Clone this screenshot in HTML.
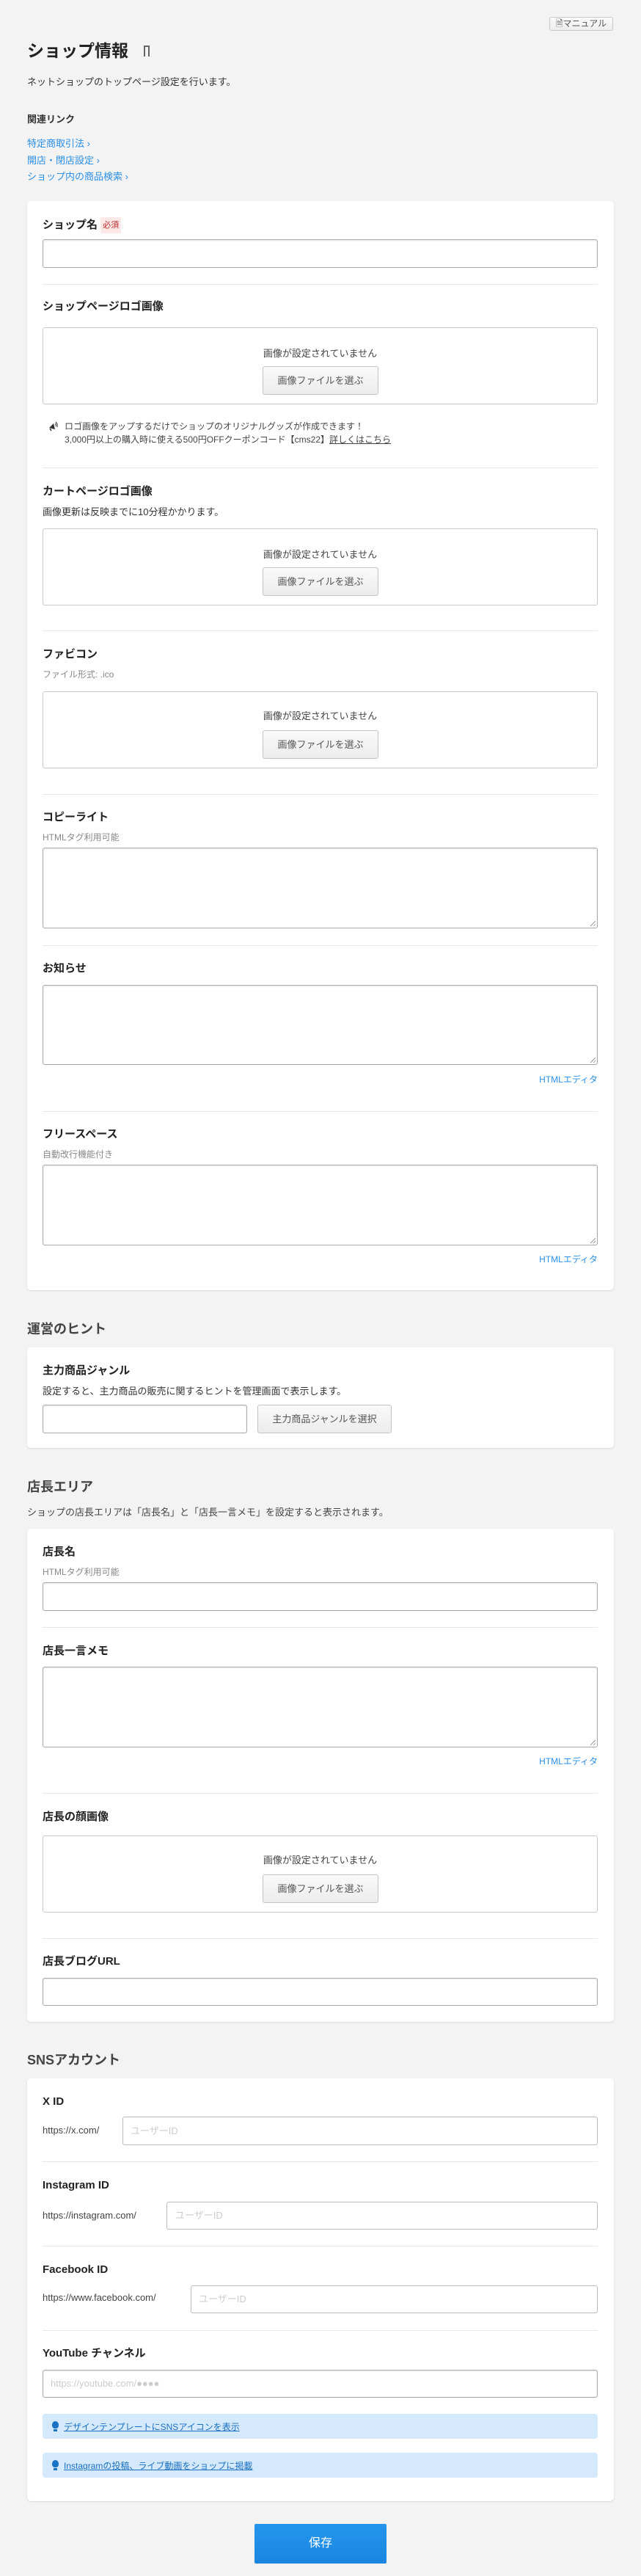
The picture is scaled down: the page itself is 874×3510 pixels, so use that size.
<!DOCTYPE html>
<html><head><meta charset="utf-8"><style>
*{box-sizing:border-box;margin:0;padding:0}
body{width:874px;height:3510px;background:#f3f3f3;font-family:"Liberation Sans","Noto Sans CJK JP",sans-serif;color:#333;position:relative;overflow:hidden}
.a{position:absolute;white-space:nowrap}
.card{position:absolute;left:37px;width:800px;background:#fff;border-radius:5px;box-shadow:0 1px 2px rgba(0,0,0,.12)}
.lbl{position:absolute;left:58px;font-size:15px;font-weight:bold;color:#222;line-height:20px;white-space:nowrap}
.sub{position:absolute;left:58px;font-size:12px;color:#888;line-height:16px;white-space:nowrap}
.txt{position:absolute;font-size:13px;color:#333;line-height:18px;white-space:nowrap}
.inp{position:absolute;background:#fff;border:1px solid #aaa;border-radius:3px;box-shadow:inset 0 1px 2px rgba(0,0,0,.1)}
.hr{position:absolute;left:58px;width:757px;height:1px;background:#e8e8e8}
.box{position:absolute;left:58px;width:757px;border:1px solid #c9c9c9;border-radius:3px;background:#fff}
.box .m{position:absolute;left:0;right:0;text-align:center;font-size:13px;color:#444}
.btn{position:absolute;left:299px;width:158px;height:39px;border:1px solid #c4c4c4;border-radius:3px;background:linear-gradient(#fafafa,#ececec);font-size:13px;color:#555;text-align:center;line-height:37px}
.link{position:absolute;font-size:12px;color:#2a8fe6;line-height:16px;white-space:nowrap}
.ed{position:absolute;right:59px;font-size:12px;color:#2a8fe6;line-height:16px}
.h2{position:absolute;left:37px;font-size:18px;font-weight:bold;color:#444;line-height:24px;white-space:nowrap}
.ph{position:absolute;font-size:13px;color:#ccc;line-height:18px;white-space:nowrap}
.bar{position:absolute;left:58px;width:757px;height:34px;background:#d4eafc;border-radius:4px}
.bar span{position:absolute;left:29px;top:9px;font-size:12px;color:#1a6fc0;text-decoration:underline;white-space:nowrap}
.bar i{position:absolute;left:13px;top:10px;width:9px;height:10px;background:#1a72c4;border-radius:50% 50% 40% 40%}
.bar i:after{content:"";position:absolute;left:2px;top:11px;width:5px;height:3px;background:#1a72c4}
.rz{position:absolute;right:2px;bottom:2px;width:7px;height:7px;background:linear-gradient(135deg,transparent 45%,#999 45%,#999 55%,transparent 55%,transparent 75%,#999 75%,#999 85%,transparent 85%)}
</style></head><body>

<div class="a" style="left:749px;top:23px;width:87px;height:19px;border:1px solid #c8c8c8;border-radius:3px;background:linear-gradient(#fafafa,#eee);font-size:12px;color:#555;line-height:17px;text-align:center">&#x1F5CE;マニュアル</div>

<div class="a" style="left:37px;top:54px;font-size:23px;font-weight:bold;color:#222;line-height:30px">ショップ情報</div>
<div class="a" style="left:196px;top:62px;width:8px;height:15px;border:2px solid #666;border-bottom:none"></div>
<div class="txt" style="left:37px;top:103px">ネットショップのトップページ設定を行います。</div>
<div class="txt" style="left:37px;top:154px;font-weight:bold;color:#333">関連リンク</div>
<div class="link" style="left:37px;top:188px;font-size:13px">特定商取引法 ›</div>
<div class="link" style="left:37px;top:211px;font-size:13px">開店・閉店設定 ›</div>
<div class="link" style="left:37px;top:233px;font-size:13px">ショップ内の商品検索 ›</div>

<div class="card" style="top:274px;height:1484px"></div>
<div class="lbl" style="top:296px">ショップ名 <span style="display:inline-block;background:#fde8e8;color:#c0282a;font-size:11px;font-weight:normal;padding:1px 3px;vertical-align:1px">必須</span></div>
<div class="inp" style="left:58px;top:326px;width:757px;height:39px"></div>
<div class="hr" style="top:387px"></div>

<div class="lbl" style="top:408px">ショップページロゴ画像</div>
<div class="box" style="top:446px;height:105px"><div class="m" style="top:24px">画像が設定されていません</div><div class="btn" style="top:52px">画像ファイルを選ぶ</div></div>
<svg class="a" style="left:66px;top:574px" width="14" height="14" viewBox="0 0 14 14"><path d="M1 9 L7 3 L9 11 Z" fill="#333"/><path d="M2 10 L4 13" stroke="#333" stroke-width="1.5"/><path d="M9 3 Q11 5 10 7 M10 1 Q13 4 12 8" stroke="#333" fill="none" stroke-width="1"/></svg>
<div class="txt" style="left:88px;top:572px;font-size:12px;line-height:18px;color:#444">ロゴ画像をアップするだけでショップのオリジナルグッズが作成できます！<br>3,000円以上の購入時に使える500円OFFクーポンコード【cms22】<u>詳しくはこちら</u></div>
<div class="hr" style="top:637px"></div>

<div class="lbl" style="top:660px">カートページロゴ画像</div>
<div class="txt" style="left:58px;top:689px">画像更新は反映までに10分程かかります。</div>
<div class="box" style="top:720px;height:105px"><div class="m" style="top:24px">画像が設定されていません</div><div class="btn" style="top:52px">画像ファイルを選ぶ</div></div>
<div class="hr" style="top:859px"></div>

<div class="lbl" style="top:882px">ファビコン</div>
<div class="sub" style="top:911px">ファイル形式: .ico</div>
<div class="box" style="top:942px;height:105px"><div class="m" style="top:22px">画像が設定されていません</div><div class="btn" style="top:52px">画像ファイルを選ぶ</div></div>
<div class="hr" style="top:1082px"></div>

<div class="lbl" style="top:1104px">コピーライト</div>
<div class="sub" style="top:1133px">HTMLタグ利用可能</div>
<div class="inp" style="left:58px;top:1155px;width:757px;height:110px"><div class="rz"></div></div>
<div class="hr" style="top:1288px"></div>

<div class="lbl" style="top:1310px">お知らせ</div>
<div class="inp" style="left:58px;top:1342px;width:757px;height:109px"><div class="rz"></div></div>
<div class="ed" style="top:1463px">HTMLエディタ</div>
<div class="hr" style="top:1514px"></div>

<div class="lbl" style="top:1536px">フリースペース</div>
<div class="sub" style="top:1565px">自動改行機能付き</div>
<div class="inp" style="left:58px;top:1587px;width:757px;height:110px"><div class="rz"></div></div>
<div class="ed" style="top:1708px">HTMLエディタ</div>

<div class="h2" style="top:1799px">運営のヒント</div>
<div class="card" style="top:1836px;height:137px"></div>
<div class="lbl" style="top:1858px">主力商品ジャンル</div>
<div class="txt" style="left:58px;top:1887px">設定すると、主力商品の販売に関するヒントを管理画面で表示します。</div>
<div class="inp" style="left:58px;top:1914px;width:279px;height:39px"></div>
<div class="btn" style="left:351px;top:1914px;width:183px;height:39px;line-height:37px">主力商品ジャンルを選択</div>

<div class="h2" style="top:2014px">店長エリア</div>
<div class="txt" style="left:37px;top:2052px;color:#444">ショップの店長エリアは「店長名」と「店長一言メモ」を設定すると表示されます。</div>
<div class="card" style="top:2083px;height:672px"></div>
<div class="lbl" style="top:2105px">店長名</div>
<div class="sub" style="top:2134px">HTMLタグ利用可能</div>
<div class="inp" style="left:58px;top:2156px;width:757px;height:39px"></div>
<div class="hr" style="top:2217px"></div>
<div class="lbl" style="top:2240px">店長一言メモ</div>
<div class="inp" style="left:58px;top:2271px;width:757px;height:110px"><div class="rz"></div></div>
<div class="ed" style="top:2392px">HTMLエディタ</div>
<div class="hr" style="top:2443px"></div>
<div class="lbl" style="top:2466px">店長の顔画像</div>
<div class="box" style="top:2501px;height:105px"><div class="m" style="top:22px">画像が設定されていません</div><div class="btn" style="top:52px">画像ファイルを選ぶ</div></div>
<div class="hr" style="top:2641px"></div>
<div class="lbl" style="top:2663px">店長ブログURL</div>
<div class="inp" style="left:58px;top:2695px;width:757px;height:38px"></div>

<div class="h2" style="top:2795px">SNSアカウント</div>
<div class="card" style="top:2832px;height:576px"></div>
<div class="lbl" style="top:2854px">X ID</div>
<div class="txt" style="left:58px;top:2894px;color:#444">https://x.com/</div>
<div class="inp" style="left:167px;top:2884px;width:648px;height:39px;box-shadow:none;border-color:#bbb"></div>
<div class="ph" style="left:178px;top:2895px">ユーザーID</div>
<div class="hr" style="top:2945px"></div>
<div class="lbl" style="top:2968px">Instagram ID</div>
<div class="txt" style="left:58px;top:3010px;color:#444">https://instagram.com/</div>
<div class="inp" style="left:227px;top:3000px;width:588px;height:38px;box-shadow:none;border-color:#bbb"></div>
<div class="ph" style="left:239px;top:3010px">ユーザーID</div>
<div class="hr" style="top:3060px"></div>
<div class="lbl" style="top:3083px">Facebook ID</div>
<div class="txt" style="left:58px;top:3122px;color:#444">https://www.facebook.com/</div>
<div class="inp" style="left:260px;top:3114px;width:555px;height:38px;box-shadow:none;border-color:#bbb"></div>
<div class="ph" style="left:271px;top:3124px">ユーザーID</div>
<div class="hr" style="top:3175px"></div>
<div class="lbl" style="top:3197px">YouTube チャンネル</div>
<div class="inp" style="left:58px;top:3229px;width:757px;height:38px"></div>
<div class="ph" style="left:69px;top:3239px">https://youtube.com/●●●●</div>
<div class="bar" style="top:3289px"><i></i><span>デザインテンプレートにSNSアイコンを表示</span></div>
<div class="bar" style="top:3342px"><i></i><span>Instagramの投稿、ライブ動画をショップに掲載</span></div>

<div class="a" style="left:347px;top:3439px;width:180px;height:54px;background:linear-gradient(#2596ec,#1a85e0);border-radius:2px;color:#fff;font-size:16px;text-align:center;line-height:54px">保存</div>
</body></html>
